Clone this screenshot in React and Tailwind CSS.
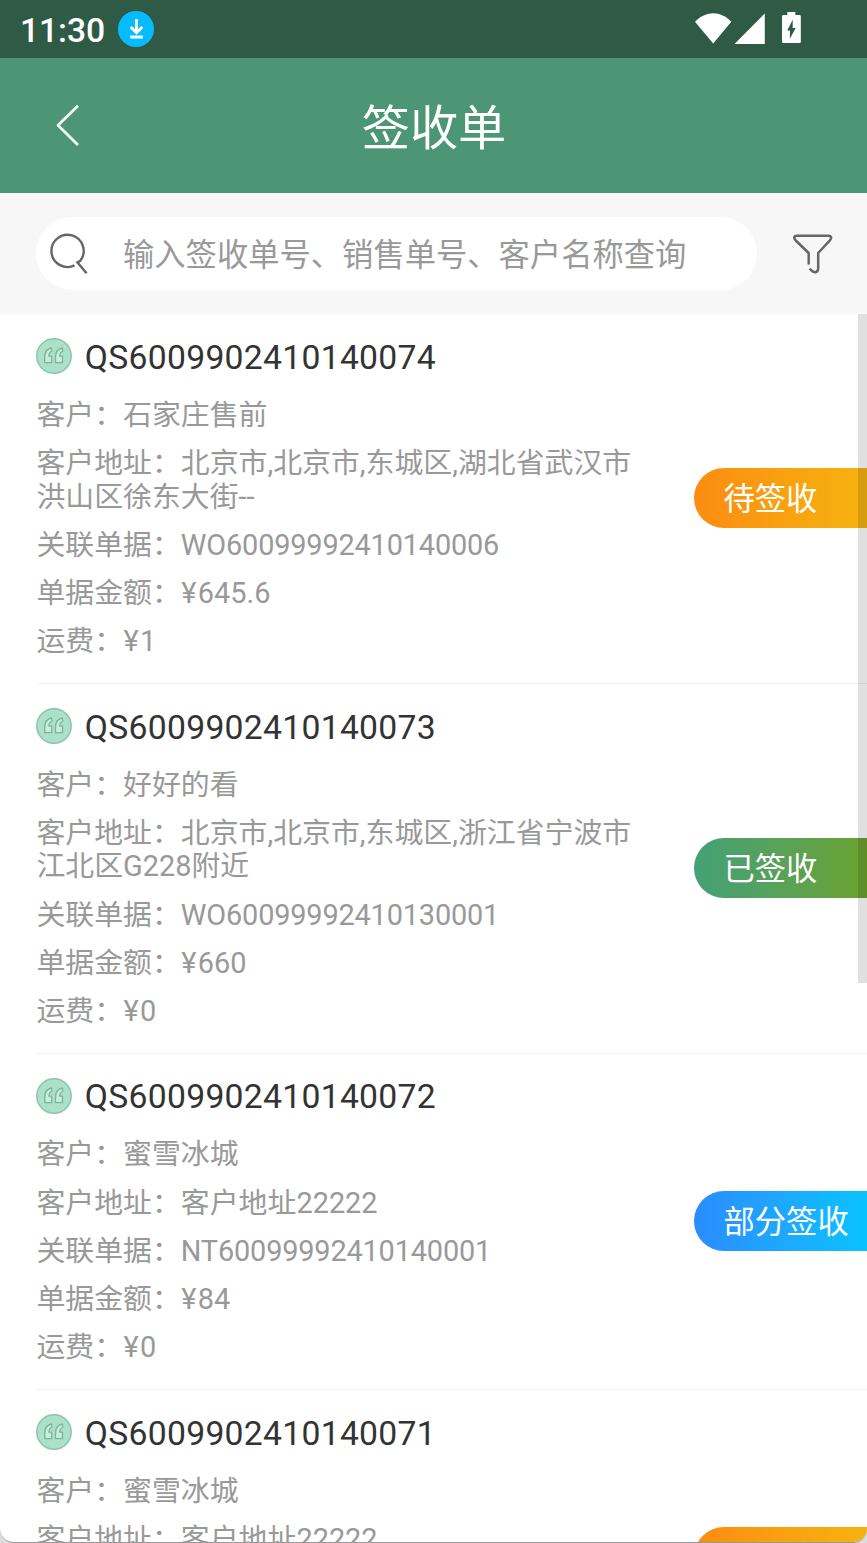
const receipts = [
  {
    no: "QS6009902410140074",
    customer: "石家庄售前",
    address: ["北京市,北京市,东城区,湖北省武汉市", "洪山区徐东大街--"],
    order: "WO60099992410140006",
    amount: "645.6",
    freight: "1",
    status: "pending",
  },
  {
    no: "QS6009902410140073",
    customer: "好好的看",
    address: ["北京市,北京市,东城区,浙江省宁波市", "江北区G228附近"],
    order: "WO60099992410130001",
    amount: "660",
    freight: "0",
    status: "signed",
  },
  {
    no: "QS6009902410140072",
    customer: "蜜雪冰城",
    address: ["客户地址22222"],
    order: "NT60099992410140001",
    amount: "84",
    freight: "0",
    status: "partial",
  },
  {
    no: "QS6009902410140071",
    customer: "蜜雪冰城",
    address: ["客户地址22222"],
    order: "NT60099992410140001",
    amount: "84",
    freight: "0",
    status: "pending",
  },
];

const statuses = {
  pending: { label: "待签收", color: "from-[#fc8c11] to-[#f5b30f]" },
  signed: { label: "已签收", color: "from-[#43a077] to-[#6ba22b]" },
  partial: { label: "部分签收", color: "from-[#2a8cff] to-[#08c2ff]" },
};

function StatusBar() {
  return (
    <div className="flex h-[58px] shrink-0 items-center bg-[#2f5a46] pr-[66px] pl-5 text-white">
      <span className="mt-[3px] w-[98px] text-[33.7px] leading-none font-medium tracking-[-0.1px]">11:30</span>
      <svg className="size-9" viewBox="0 0 36 36">
        <circle cx="18" cy="18" r="18" fill="#06bcff" />
        <path d="M18.5 8.300V21M12.700 16l5.800 5.800L24.300 16M12.300 26h12.500" fill="none" stroke="#fff" strokeWidth="2.900" />
      </svg>
      <svg className="ml-auto h-[34px] w-[107px]" viewBox="0 0 107 34" fill="#fff">
        <path d="M1 9.800C12 -1.600 26.500 -1.600 37.300 9.800L19.200 31.600Z" />
        <path d="M40.500 32L70.800 1.500V32Z" />
        <path
          fillRule="evenodd"
          d="M93.300 0h8v3h4.200q1.300 0 1.300 1.300v25.400q0 1.300 -1.300 1.300H89.300q-1.300 0 -1.300 -1.300V4.300q0 -1.300 1.300 -1.300h4zM98.700 7.800L93.200 18.500h2.700v8.200L101.700 16h-3z"
        />
      </svg>
    </div>
  );
}

function Header() {
  return (
    <header className="grid h-[135px] shrink-0 grid-cols-[1fr_auto_1fr] items-center bg-[#4d9675] text-white">
      <svg className="ml-[54px] size-[44px]" viewBox="0 0 44 44" fill="none" stroke="#f1f7f4" strokeWidth="2.800" strokeLinejoin="round">
        <path d="M24 1.800L4 21.300L24 41.100" />
      </svg>
      <h1 className="pt-[7px] pl-px text-[48.2px] leading-[56px]">签收单</h1>
    </header>
  );
}

function SearchBar() {
  return (
    <div className="flex h-[121px] shrink-0 items-center bg-[#f7f7f7] pr-[34px] pl-9">
      <div className="flex h-[73px] w-[721px] items-center rounded-full bg-white pl-3">
        <svg className="size-[42px]" viewBox="0 0 42 42" fill="none" stroke="#666" strokeWidth="2.400">
          <path d="M26.500 32.400A16.100 16.100 0 1 1 32.300 27.700L29.400 29.300L38.600 40.300" />
        </svg>
        <span className="ml-[33px] pt-[5px] text-[31.3px] leading-[40px] text-[#999]">输入签收单号、销售单号、客户名称查询</span>
      </div>
      <svg
        className="ml-auto size-10"
        viewBox="1 1 40 40"
        fill="none"
        stroke="#666"
        strokeWidth="2.500"
        strokeLinecap="round"
        strokeLinejoin="round"
      >
        <path d="M16.700 30.500V20L3.700 7.500C1.200 4.700 2.200 2.700 4.800 2.700H36.500C39.100 2.700 40.100 4.700 37.900 7.300L26.200 20V35C26.200 40.500 21.500 40.100 18.300 36.400" />
      </svg>
    </div>
  );
}

function QuoteIcon() {
  return (
    <svg className="size-9 shrink-0" viewBox="0 0 36 36">
      <circle cx="18" cy="18" r="17.200" fill="#ade0c9" stroke="#8bc6ab" strokeWidth="1.500" />
      <g fill="#cdebdc" stroke="#74b898" strokeWidth="1.300" strokeLinejoin="round">
        <path d="M15.500 10C10.500 11 8.700 14.500 8.700 19.500V24.700H15.700V18.200H12.900C12.900 15.300 13.700 14 16 13Z" />
        <path d="M26.300 10C21.300 11 19.500 14.500 19.500 19.500V24.700H26.500V18.200H23.700C23.700 15.300 24.500 14 26.800 13Z" />
      </g>
    </svg>
  );
}

function Price({ value }) {
  return (
    <>
      <span className="ml-[0.5px] tracking-[1.3px]">¥</span>
      {value}
    </>
  );
}

function Receipt({ receipt }) {
  const status = statuses[receipt.status];
  return (
    <li className="ml-9 flex items-center justify-between border-b border-[#f2f2f2] pt-6 pb-[24.2px]">
      <div className="flex flex-col gap-[14.45px] pl-[0.4px] text-[28.9px] leading-[33.72px] text-[#999]">
        <div className="mb-[10.2px] -ml-[0.4px] flex h-9 items-center gap-[12.8px]">
          <QuoteIcon />
          <h2 className="mt-[3px] text-[33.7px] tracking-[0.28px] text-[#333]">{receipt.no}</h2>
        </div>
        <p>客户：{receipt.customer}</p>
        <p>
          客户地址：
          {receipt.address.map((line, i) => (
            <span key={line}>
              {i > 0 && <br />}
              {line}
            </span>
          ))}
        </p>
        <p>
          关联单据：<span className="tracking-[-0.17px]">{receipt.order}</span>
        </p>
        <p>
          单据金额：
          <Price value={receipt.amount} />
        </p>
        <p>
          运费：
          <Price value={receipt.freight} />
        </p>
      </div>
      <div className={`flex h-[60px] w-[173px] items-center rounded-l-full bg-linear-to-r pt-[3px] pl-[29.5px] text-[31.3px] leading-[40px] whitespace-nowrap text-white ${status.color}`}>
        {status.label}
      </div>
    </li>
  );
}

export default function App() {
  return (
    <div className="h-[1543px] w-[867px] bg-[#ddd] font-[Roboto,'Noto_Sans_CJK_SC',sans-serif]">
      <div className="flex h-[1543px] flex-col overflow-hidden rounded-b-[14px] border-b border-[#999] bg-white">
        <StatusBar />
        <Header />
        <SearchBar />
        <main className="relative min-h-0 flex-1 overflow-hidden">
          <ul>
            {receipts.map((receipt) => (
              <Receipt key={receipt.no} receipt={receipt} />
            ))}
          </ul>
          <div className="absolute top-0 right-0 h-[669px] w-[9px] bg-black/12" />
        </main>
      </div>
    </div>
  );
}
